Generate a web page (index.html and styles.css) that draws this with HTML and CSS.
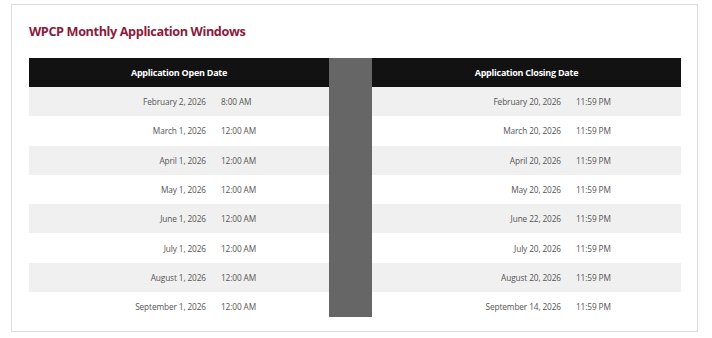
FILE: index.html
```html
<!DOCTYPE html>
<html lang="en">
<head>
    <meta charset="UTF-8">
    <title>WPCP Monthly Application Windows</title>
    <link rel="stylesheet" href="styles.css">
</head>
<body>
    <div class="card">
        <h2 class="title">WPCP Monthly Application Windows</h2>

        <div class="schedule">
            <!-- open dates -->
            <div class="col col-open">
                <div class="col-head">Application Open Date</div>
                <div class="row"><span class="date">February 2, 2026</span><span class="time">8:00 AM</span></div>
                <div class="row"><span class="date">March 1, 2026</span><span class="time">12:00 AM</span></div>
                <div class="row"><span class="date">April 1, 2026</span><span class="time">12:00 AM</span></div>
                <div class="row"><span class="date">May 1, 2026</span><span class="time">12:00 AM</span></div>
                <div class="row"><span class="date">June 1, 2026</span><span class="time">12:00 AM</span></div>
                <div class="row"><span class="date">July 1, 2026</span><span class="time">12:00 AM</span></div>
                <div class="row"><span class="date">August 1, 2026</span><span class="time">12:00 AM</span></div>
                <div class="row"><span class="date">September 1, 2026</span><span class="time">12:00 AM</span></div>
            </div>

            <div class="divider"></div>

            <!-- closing dates -->
            <div class="col col-close">
                <div class="col-head">Application Closing Date</div>
                <div class="row"><span class="date">February 20, 2026</span><span class="time">11:59 PM</span></div>
                <div class="row"><span class="date">March 20, 2026</span><span class="time">11:59 PM</span></div>
                <div class="row"><span class="date">April 20, 2026</span><span class="time">11:59 PM</span></div>
                <div class="row"><span class="date">May 20, 2026</span><span class="time">11:59 PM</span></div>
                <div class="row"><span class="date">June 22, 2026</span><span class="time">11:59 PM</span></div>
                <div class="row"><span class="date">July 20, 2026</span><span class="time">11:59 PM</span></div>
                <div class="row"><span class="date">August 20, 2026</span><span class="time">11:59 PM</span></div>
                <div class="row"><span class="date">September 14, 2026</span><span class="time">11:59 PM</span></div>
            </div>
        </div>
    </div>
</body>
</html>
```

FILE: styles.css
```css
* {
    box-sizing: border-box;
    margin: 0;
    padding: 0;
}
body {
    font-family: 'Open Sans', 'Noto Sans', sans-serif;
    background: #fff;
    color: #555;
}
.card {
    margin: 4px 0 0 11px;
    width: 687px;
    height: 328px;
    border: 1px solid #dcdcdc;
    padding: 16px 16px 0 17px;
}
.title {
    font-size: 12.7px;
    line-height: 20px;
    font-weight: 700;
    color: #8c1a3c;
    letter-spacing: -0.4px;
    margin-bottom: 17px;
}
.schedule {
    display: flex;
    align-items: flex-start;
}
.col-open {
    width: 300px;
}
.col-close {
    width: 309px;
}
.divider {
    width: 43px;
    height: 259px;
    background: #666;
}
.col-head {
    height: 29px;
    line-height: 29px;
    background: #121212;
    color: #fff;
    font-size: 9px;
    font-weight: 700;
    letter-spacing: -0.25px;
    text-align: center;
}
.row {
    display: grid;
    height: 29.3px;
    align-items: center;
    font-size: 8.3px;
    letter-spacing: -0.12px;
}
.col-open .row {
    grid-template-columns: 184px 1fr;
}
.col-close .row {
    grid-template-columns: 196px 1fr;
}
.row:nth-child(even) {
    background: #f0f0f0;
}
.date {
    text-align: right;
    padding-right: 7px;
}
.time {
    padding-left: 8px;
}
```
